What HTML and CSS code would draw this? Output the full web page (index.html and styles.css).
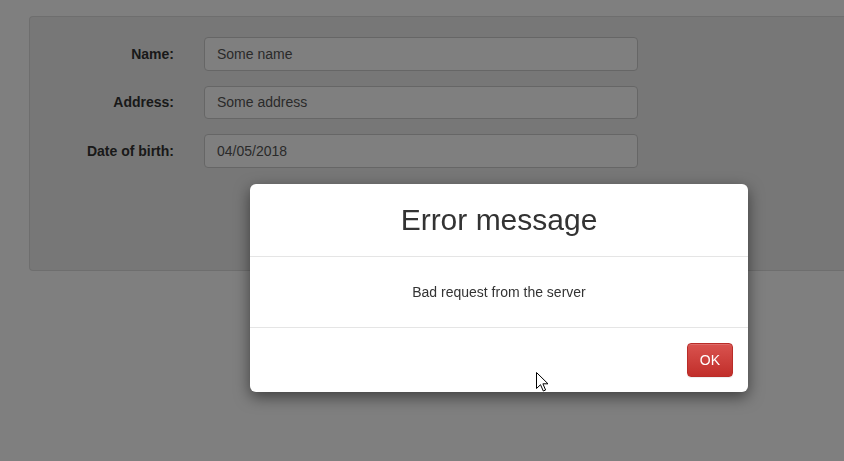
FILE: index.html
```html
<!DOCTYPE html>
<html>
<head>
<meta charset="utf-8">
<link rel="stylesheet" href="styles.css">
</head>
<body>
<div class="page">
  <form class="panel">
    <div class="row">
      <label class="lbl">Name:</label>
      <div class="input">Some name</div>
    </div>
    <div class="row">
      <label class="lbl">Address:</label>
      <div class="input">Some address</div>
    </div>
    <div class="row">
      <label class="lbl">Date of birth:</label>
      <div class="input">04/05/2018</div>
    </div>
  </form>
</div>
<div class="backdrop"></div>
<div class="modal">
  <div class="modal-header"><h4 class="modal-title">Error message</h4></div>
  <div class="modal-body">Bad request from the server</div>
  <div class="modal-footer"><button class="btn-danger">OK</button></div>
</div>
<svg class="cursor" width="13" height="20" viewBox="0 0 13 20">
  <path d="M0.5 0.5 L0.5 16.5 L4.5 12.7 L7.3 19 L9.6 18 L6.9 11.8 L12 11.8 Z" fill="#fff" stroke="#000" stroke-width="1" stroke-linejoin="miter"/>
</svg>
</body>
</html>
```
FILE: styles.css
```css
html, body {
  margin: 0;
  padding: 0;
  width: 844px;
  height: 461px;
  overflow: hidden;
  background: #fff;
  font-family: "Liberation Sans", Arial, sans-serif;
  font-size: 14px;
  color: #333;
}
.page {
  padding-top: 16px;
  padding-left: 29px;
}
.panel {
  box-sizing: content-box;
  margin: 0;
  padding: 20px 0 0 20px;
  height: 233px;
  background: #eeeeee;
  border: 1px solid #dcdcdc;
  border-right: none;
  border-radius: 4px 0 0 4px;
  display: flex;
  flex-direction: column;
  gap: 15px;
}
.row {
  display: grid;
  grid-template-columns: 124px 434px;
  column-gap: 30px;
  align-items: center;
}
.lbl {
  text-align: right;
  font-weight: bold;
  color: #333;
}
.input {
  box-sizing: border-box;
  height: 33.5px;
  padding: 0 12px;
  display: flex;
  align-items: center;
  background: #fff;
  border: 1px solid #ccc;
  border-radius: 4px;
  color: #555;
}
.backdrop {
  position: fixed;
  inset: 0;
  background: rgba(0, 0, 0, 0.5);
}
.modal {
  position: absolute;
  left: 250px;
  top: 184px;
  width: 498px;
  background: #fff;
  border-radius: 6px;
  box-shadow: 0 5px 15px rgba(0, 0, 0, 0.5);
}
.modal-header {
  padding: 15px;
  border-bottom: 1px solid #e5e5e5;
  text-align: center;
}
.modal-title {
  margin: 0;
  font-size: 30px;
  font-weight: normal;
  line-height: 42px;
  color: #333;
}
.modal-body {
  padding: 25px 15px;
  line-height: 20px;
  text-align: center;
  color: #333;
}
.modal-footer {
  padding: 15px;
  border-top: 1px solid #e5e5e5;
  display: flex;
  justify-content: flex-end;
}
.btn-danger {
  font-family: "Liberation Sans", Arial, sans-serif;
  font-size: 14px;
  line-height: 20px;
  padding: 6px 12px;
  color: #fff;
  background: linear-gradient(to bottom, #d9534f 0%, #c12e2a 100%);
  border: 1px solid #b92c28;
  border-radius: 4px;
  box-shadow: inset 0 1px 0 rgba(255,255,255,.15), 0 1px 1px rgba(0,0,0,.075);
}
.cursor {
  position: absolute;
  left: 536px;
  top: 372px;
}
```
